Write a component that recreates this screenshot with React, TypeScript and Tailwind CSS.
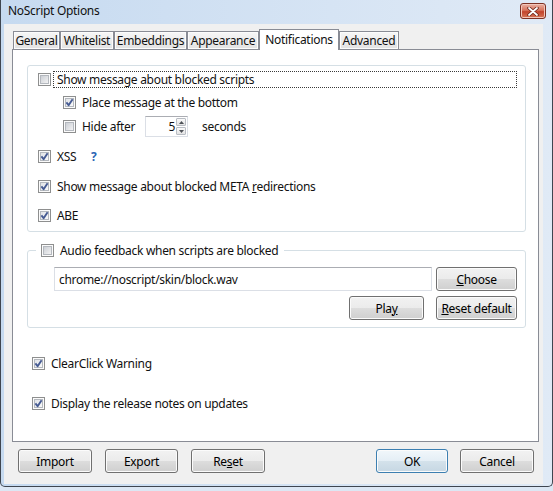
import type { ReactNode } from 'react';

const Check = ({ on = false }: { on?: boolean }) => (
    <svg width="13" height="13" viewBox="0 0 13 13" className="shrink-0">
        <defs>
            <linearGradient id="cbInner" x1="0" y1="0" x2="1" y2="1">
                <stop offset="0" stopColor="#c9cdd3" />
                <stop offset="1" stopColor="#f5f5f5" />
            </linearGradient>
            <linearGradient id="cbInnerOn" x1="0" y1="0" x2="1" y2="1">
                <stop offset="0" stopColor="#dfe2e6" />
                <stop offset="1" stopColor="#fbfbfb" />
            </linearGradient>
        </defs>
        <rect x="0.5" y="0.5" width="12" height="12" fill="#fbfbfb" stroke="#8e8f8f" />
        <rect x="2.5" y="2.5" width="8" height="8" fill={on ? 'url(#cbInnerOn)' : 'url(#cbInner)'} stroke="#b4b8be" />
        {on && (
            <path d="M3.4 6.4 L5.6 9.2 L9.6 3.2" fill="none" stroke="#465b93" strokeWidth="1.9" strokeLinejoin="round" />
        )}
    </svg>
);

interface BtnProps {
    children: ReactNode;
    w: string;
    primary?: boolean;
}

const Btn = ({ children, w, primary = false }: BtnProps) => (
    <button
        className={`${w} h-[24px] shrink-0 rounded-[3px] border text-[12px] leading-[17px] tracking-[-0.3px] text-black shadow-[inset_0_0_0_1px_#fbfbfb] ${
            primary
                ? 'border-[#3c7fb1] bg-[linear-gradient(#f1f7fb,#e4eef5_50%,#d4e2eb_50%,#c6d7e3)]'
                : 'border-[#707070] bg-[linear-gradient(#f2f2f2,#ebebeb_50%,#dddddd_50%,#cfcfcf)]'
        }`}
    >
        {children}
    </button>
);

const tabs = [
    { label: 'General', w: 'w-[47px]' },
    { label: 'Whitelist', w: 'w-[54px]' },
    { label: 'Embeddings', w: 'w-[73px]' },
    { label: 'Appearance', w: 'w-[72px]' },
    { label: 'Notifications', w: 'w-[80px]', active: true },
    { label: 'Advanced', w: 'w-[60px]' },
];

export default function App() {
    return (
        <div className="h-[491px] w-[553px] overflow-hidden bg-[#dce7f4] font-['Noto_Sans',sans-serif] text-[12px] leading-[17px] tracking-[-0.3px] text-[#111]">
            {/* Window */}
            <div className="flex h-[487px] flex-col rounded-b-[5px] border-x border-b border-[#3f4650] bg-[linear-gradient(90deg,#c6daf0,#d6e4f4_60%,#e0eaf6)]">
                {/* Title bar */}
                <div className="flex h-[24px] shrink-0 items-start justify-between">
                    <span className="pl-[7px] pt-[3px] leading-[16px] text-[#101010]">NoScript Options</span>
                    <div className="mr-[6px] mt-[3px] flex h-[16px] w-[26px] items-center justify-center rounded-[3px] border border-[#7d3124] bg-[linear-gradient(#eab2a4,#d7735c_45%,#c2432c_55%,#d77758)] shadow-[inset_0_0_0_1px_#f3c6ba]">
                        <svg width="12" height="9" viewBox="0 0 12 9">
                            <path d="M2 1 L10 8 M10 1 L2 8" stroke="#6b2418" strokeWidth="3.4" strokeLinecap="round" />
                            <path d="M2 1 L10 8 M10 1 L2 8" stroke="#ffffff" strokeWidth="1.8" strokeLinecap="round" />
                        </svg>
                    </div>
                </div>

                {/* Client area */}
                <div className="ml-[3px] mr-[9px] flex h-[460px] flex-col bg-[#f0f0f0]">
                    {/* Tabs */}
                    <div className="relative z-10 -mb-px ml-[9px] mt-[5px] flex items-end">
                        {tabs.map((t) =>
                            t.active ? (
                                <div
                                    key={t.label}
                                    className={`${t.w} flex h-[21px] items-start justify-center border-x border-t border-[#898c95] bg-white pt-[1px]`}
                                >
                                    {t.label}
                                </div>
                            ) : (
                                <div
                                    key={t.label}
                                    className={`${t.w} flex h-[19px] items-center justify-center border border-[#898c95] bg-[linear-gradient(#f7f7f7,#ececec_50%,#e2e2e2)] shadow-[inset_0_0_0_1px_#fcfcfc]`}
                                >
                                    {t.label}
                                </div>
                            )
                        )}
                    </div>

                    {/* Tab panel */}
                    <div className="ml-[8px] flex h-[393px] w-[527px] flex-col border border-[#898c95] bg-white">
                        {/* Message group */}
                        <div className="ml-[14px] mt-[15px] flex h-[167px] w-[499px] flex-col rounded-[3px] border border-[#d5dfe5]">
                            <div className="mt-[5px] flex h-[17px] items-center pl-[10px] pr-[8px]">
                                <Check />
                                <div className="ml-[2px] flex h-[17px] flex-1 items-center border border-dotted border-[#3a3a3a] pl-[3px]">
                                    Show message about blocked scripts
                                </div>
                            </div>
                            <div className="mt-[6px] flex h-[17px] items-center gap-[6px] pl-[35px]">
                                <Check on />
                                <span>Place message at the bottom</span>
                            </div>
                            <div className="mt-[5px] flex h-[21px] items-center pl-[35px]">
                                <Check />
                                <span className="ml-[6px] w-[63px]">Hide after</span>
                                <div className="flex h-[21px] w-[43px] items-center border border-[#dbdfe6] border-t-[#abadb3] bg-white">
                                    <span className="flex-1 pr-[1px] text-right">5</span>
                                    <div className="mr-[1px] flex h-[17px] w-[10px] flex-col gap-px">
                                        <div className="flex flex-1 items-center justify-center rounded-[1px] border border-[#b8bcc3] bg-[linear-gradient(#fafafa,#e3e3e3)]">
                                            <svg width="5" height="3" viewBox="0 0 5 3">
                                                <path d="M0 3 L2.5 0 L5 3 Z" fill="#4d5157" />
                                            </svg>
                                        </div>
                                        <div className="flex flex-1 items-center justify-center rounded-[1px] border border-[#b8bcc3] bg-[linear-gradient(#fafafa,#e3e3e3)]">
                                            <svg width="5" height="3" viewBox="0 0 5 3">
                                                <path d="M0 0 L5 0 L2.5 3 Z" fill="#4d5157" />
                                            </svg>
                                        </div>
                                    </div>
                                </div>
                                <span className="ml-[14px]">seconds</span>
                            </div>
                            <div className="mt-[11px] flex h-[17px] items-center pl-[10px]">
                                <Check on />
                                <span className="ml-[6px] w-[34px]">XSS</span>
                                <span className="font-bold text-[#2a64b4]">?</span>
                            </div>
                            <div className="mt-[13px] flex h-[17px] items-center gap-[6px] pl-[10px]">
                                <Check on />
                                <span>
                                    Show message about blocked META <u>r</u>edirections
                                </span>
                            </div>
                            <div className="mt-[12px] flex h-[17px] items-center gap-[6px] pl-[10px]">
                                <Check on />
                                <span>ABE</span>
                            </div>
                        </div>

                        {/* Audio feedback group */}
                        <fieldset className="ml-[14px] mt-[10px] w-[499px] rounded-[3px] border border-[#d5dfe5] pb-[7px]">
                            <legend className="ml-[8px] flex h-[17px] items-center gap-[6px] pl-[5px] pr-[6px]">
                                <Check />
                                <span>Audio feedback when scripts are blocked</span>
                            </legend>
                            <div className="mt-[8px] flex items-center pr-[8px]">
                                <div className="ml-[26px] flex h-[24px] w-[378px] items-center border border-[#dbdfe6] border-t-[#abadb3] bg-white pl-[4px]">
                                    chrome://noscript/skin/block.wav
                                </div>
                                <div className="ml-[4px]">
                                    <Btn w="w-[81px]">
                                        <u>C</u>hoose
                                    </Btn>
                                </div>
                            </div>
                            <div className="mt-[5px] flex items-center justify-end gap-[12px] pr-[8px]">
                                <Btn w="w-[75px]">
                                    Pla<u>y</u>
                                </Btn>
                                <Btn w="w-[81px]">
                                    <u>R</u>eset default
                                </Btn>
                            </div>
                        </fieldset>

                        <div className="ml-[19px] mt-[27px] flex h-[17px] items-center gap-[6px]">
                            <Check on />
                            <span>ClearClick Warning</span>
                        </div>
                        <div className="ml-[19px] mt-[23px] flex h-[17px] items-center gap-[6px]">
                            <Check on />
                            <span>Display the release notes on updates</span>
                        </div>
                    </div>

                    {/* Dialog buttons */}
                    <div className="ml-[14px] mr-[9px] mt-[7px] flex items-center">
                        <div className="flex gap-[13px]">
                            <Btn w="w-[74px]">Import</Btn>
                            <Btn w="w-[73px]">Export</Btn>
                            <Btn w="w-[74px]">
                                Re<u>s</u>et
                            </Btn>
                        </div>
                        <div className="ml-auto flex gap-[12px]">
                            <Btn w="w-[72px]" primary>
                                OK
                            </Btn>
                            <Btn w="w-[74px]">Cancel</Btn>
                        </div>
                    </div>
                </div>
            </div>
        </div>
    );
}
